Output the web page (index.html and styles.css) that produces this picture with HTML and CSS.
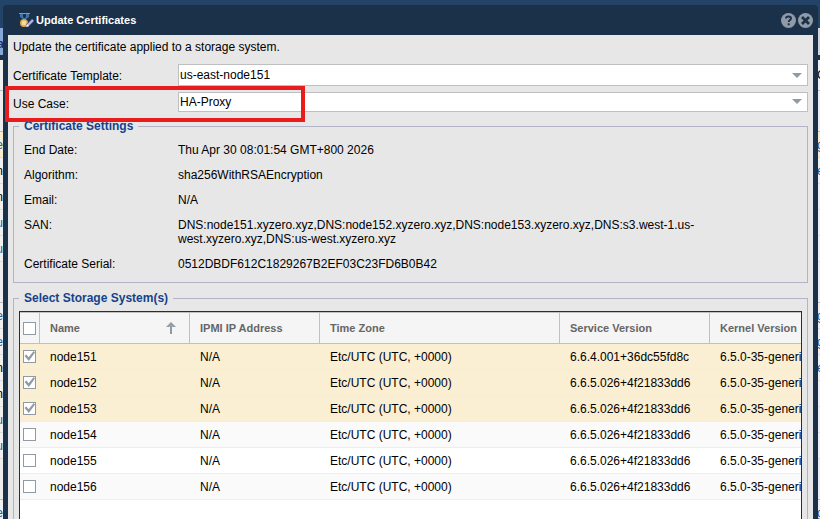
FILE: index.html
```
<!DOCTYPE html>
<html lang="en">
<head>
    <meta charset="UTF-8">
    <meta name="viewport" content="width=device-width, initial-scale=1.0">
    <title>Update Certificates</title>
    <link rel="stylesheet" href="styles.css">
</head>
<body>
    <!-- page behind the dialog -->
    <div class="backdrop" aria-hidden="true">
        <div class="back-top"></div>
        <div class="back-tabs"><span class="back-tab">Ma</span></div>
        <div class="back-head"><span></span><span>C</span></div>
        <div class="back-group"></div>
        <div class="back-row selected"><a>e</a><a>g</a></div>
        <div class="back-row"><span>n</span><a>e</a></div>
        <div class="back-row"><span>n</span></div>
        <div class="back-row"><a>qu</a></div>
        <div class="back-row"><a>qu</a></div>
        <div class="back-group"></div>
        <div class="back-row"><a>e</a><a>g</a></div>
        <div class="back-row"><a>e</a><a>g</a></div>
        <div class="back-row"><span>n</span><a>e</a></div>
        <div class="back-row"><span>n</span></div>
        <div class="back-row"><a>qu</a></div>
        <div class="back-row"><a>qu</a></div>
        <div class="back-group"></div>
        <div class="back-row"><a>e</a><a>g</a></div>
    </div>

    <div class="dialog" role="dialog" aria-labelledby="dialog-title">
        <header class="dialog-header">
            <svg class="medal" viewBox="0 0 15 15" aria-hidden="true">
                <path d="M0 0h11v1H0z" fill="#6f9fc8"/>
                <path d="M1 1h3v3l2 2H4L1 4zM10 1H7v3L5 6h2l3-2z" fill="#3f73a5"/>
                <circle cx="5" cy="10" r="4" fill="#d9a94f"/>
                <circle cx="5" cy="10" r="2.4" fill="#f7dc95"/>
                <path d="M8 13l6-6" stroke="#55598c" stroke-width="3.4"/>
                <path d="M8 13l6-6" stroke="#b8b9dc" stroke-width="1.8"/>
                <path d="M7 14l1-3 2 2z" fill="#eee"/>
            </svg>
            <h1 id="dialog-title">Update Certificates</h1>
            <button class="tool" type="button" aria-label="Help">
                <svg viewBox="0 0 15 15">
                    <circle cx="7.5" cy="7.5" r="7.5" fill="#919aa7"/>
                    <path d="M5 5.6C5 4.2 6 3.5 7.5 3.5S10 4.2 10 5.4C10 7 7.7 6.9 7.7 9" fill="none" stroke="#1b3049" stroke-width="1.9"/>
                    <path d="M6.7 10.3h2v2h-2z" fill="#1b3049"/>
                </svg>
            </button>
            <button class="tool" type="button" aria-label="Close">
                <svg viewBox="0 0 15 15">
                    <circle cx="7.5" cy="7.5" r="7.5" fill="#919aa7"/>
                    <path d="M4 4l7 7M11 4l-7 7" fill="none" stroke="#1b3049" stroke-width="2.8"/>
                </svg>
            </button>
        </header>

        <form class="dialog-body">
            <p class="intro">Update the certificate applied to a storage system.</p>

            <div class="field">
                <label for="template">Certificate Template:</label>
                <div class="combo">
                    <select id="template"><option>us-east-node151</option></select>
                </div>
            </div>
            <div class="field marked">
                <label for="use-case">Use Case:</label>
                <div class="combo">
                    <select id="use-case"><option>HA-Proxy</option></select>
                </div>
            </div>

            <fieldset class="settings">
                <legend>Certificate Settings</legend>
                <dl>
                    <dt>End Date:</dt>
                    <dd>Thu Apr 30 08:01:54 GMT+800 2026</dd>
                    <dt>Algorithm:</dt>
                    <dd>sha256WithRSAEncryption</dd>
                    <dt>Email:</dt>
                    <dd>N/A</dd>
                    <dt>SAN:</dt>
                    <dd>DNS:node151.xyzero.xyz,DNS:node152.xyzero.xyz,DNS:node153.xyzero.xyz,DNS:s3.west-1.us-<br>west.xyzero.xyz,DNS:us-west.xyzero.xyz</dd>
                    <dt>Certificate Serial:</dt>
                    <dd>0512DBDF612C1829267B2EF03C23FD6B0B42</dd>
                </dl>
            </fieldset>

            <fieldset class="systems">
                <legend>Select Storage System(s)</legend>
                <div class="grid">
                    <table>
                        <colgroup>
                            <col class="col-check">
                            <col class="col-name">
                            <col class="col-ipmi">
                            <col class="col-zone">
                            <col class="col-version">
                            <col class="col-version">
                        </colgroup>
                        <thead>
                            <tr>
                                <th><input type="checkbox" aria-label="Select all"></th>
                                <th>
                                    <div class="sorted">
                                        Name
                                        <svg viewBox="0 0 10 12" aria-hidden="true">
                                            <path d="M4 4h2v8H4zM0 5l5-5 5 5H7L5 3.500 3 5z" fill="#8f9aa5"/>
                                        </svg>
                                    </div>
                                </th>
                                <th>IPMI IP Address</th>
                                <th>Time Zone</th>
                                <th>Service Version</th>
                                <th>Kernel Version</th>
                            </tr>
                        </thead>
                        <tbody>
                            <tr class="selected">
                                <td><input type="checkbox" aria-label="node151" checked></td>
                                <td>node151</td>
                                <td>N/A</td>
                                <td>Etc/UTC (UTC, +0000)</td>
                                <td>6.6.4.001+36dc55fd8c</td>
                                <td>6.5.0-35-generic</td>
                            </tr>
                            <tr class="selected">
                                <td><input type="checkbox" aria-label="node152" checked></td>
                                <td>node152</td>
                                <td>N/A</td>
                                <td>Etc/UTC (UTC, +0000)</td>
                                <td>6.6.5.026+4f21833dd6</td>
                                <td>6.5.0-35-generic</td>
                            </tr>
                            <tr class="selected">
                                <td><input type="checkbox" aria-label="node153" checked></td>
                                <td>node153</td>
                                <td>N/A</td>
                                <td>Etc/UTC (UTC, +0000)</td>
                                <td>6.6.5.026+4f21833dd6</td>
                                <td>6.5.0-35-generic</td>
                            </tr>
                            <tr>
                                <td><input type="checkbox" aria-label="node154"></td>
                                <td>node154</td>
                                <td>N/A</td>
                                <td>Etc/UTC (UTC, +0000)</td>
                                <td>6.6.5.026+4f21833dd6</td>
                                <td>6.5.0-35-generic</td>
                            </tr>
                            <tr>
                                <td><input type="checkbox" aria-label="node155"></td>
                                <td>node155</td>
                                <td>N/A</td>
                                <td>Etc/UTC (UTC, +0000)</td>
                                <td>6.6.5.026+4f21833dd6</td>
                                <td>6.5.0-35-generic</td>
                            </tr>
                            <tr>
                                <td><input type="checkbox" aria-label="node156"></td>
                                <td>node156</td>
                                <td>N/A</td>
                                <td>Etc/UTC (UTC, +0000)</td>
                                <td>6.6.5.026+4f21833dd6</td>
                                <td>6.5.0-35-generic</td>
                            </tr>
                        </tbody>
                    </table>
                </div>
            </fieldset>
        </form>
    </div>
</body>
</html>
```
FILE: styles.css
```
* {
    box-sizing: border-box;
    margin: 0;
    padding: 0;
}

body {
    position: relative;
    height: 100vh;
    overflow: hidden;
    padding: 5px 2px 0 3px;
    font-family: "Liberation Sans", Arial, sans-serif;
    font-size: 12px;
    line-height: 14px;
    color: #000;
    background: #f0f0f0;
}

/* page behind the dialog */
.backdrop {
    position: absolute;
    inset: 0;
    overflow: hidden;
}

.back-top {
    height: 28px;
    background: #234369;
}

.back-tabs {
    height: 32px;
    background: linear-gradient(to right, #86a8d8 50%, #d4d4d4 50%);
    border-bottom: 5px solid #1b3049;
}

.back-tab {
    display: flex;
    justify-content: flex-end;
    width: 4px;
    padding-top: 9px;
    font-weight: bold;
    color: #1b2f6b;
}

.back-head,
.back-row {
    display: flex;
    justify-content: space-between;
    align-items: center;
    border-bottom: 1px solid #dcdcdc;
}

.back-head {
    height: 31px;
    border-color: #bbb;
}

.back-row {
    height: 26px;
}

.back-head span,
.back-row > * {
    display: flex;
    justify-content: flex-end;
    width: 3px;
}

.back-head span:last-child,
.back-row > :nth-child(2) {
    justify-content: flex-start;
}

.back-row a {
    color: #1560a8;
}

.back-row.selected {
    background: #f9eccd;
}

.back-group {
    height: 41px;
    background: #ededed;
    border-bottom: 1px solid #bbb;
}

/* dialog */
.dialog {
    position: relative;
    background: #1b3049;
    border-radius: 4px 4px 0 0;
    padding: 0 5px;
}

.dialog-header {
    display: flex;
    align-items: center;
    gap: 2px;
    height: 30px;
    padding: 0 0 0 11px;
}

.dialog-header h1 {
    flex: 1;
    font-size: 11px;
    color: #fff;
}

.medal {
    width: 15px;
    height: 15px;
}

.tool {
    width: 15px;
    height: 15px;
    border: 0;
    background: none;
    cursor: pointer;
}

.tool svg {
    display: block;
}

.dialog-body {
    padding: 5px 5px 0;
    background: #e7e7e7;
}

.intro {
    margin-bottom: 10px;
}

.field {
    display: flex;
    align-items: center;
    margin-bottom: 6px;
}

.field label {
    width: 165px;
    padding-top: 2px;
}

.combo {
    position: relative;
    flex: 1;
}

.combo::after {
    content: "";
    position: absolute;
    top: 9px;
    right: 6px;
    width: 10px;
    height: 5px;
    background: #8f9aa5;
    clip-path: polygon(0 0, 100% 0, 50% 100%);
    pointer-events: none;
}

.combo select {
    display: block;
    width: 100%;
    height: 22px;
    padding: 0 20px 0 1px;
    border: 1px solid #bdbfc0;
    border-radius: 0;
    appearance: none;
    background: #fff;
    font: inherit;
    color: inherit;
}

.marked {
    position: relative;
    margin-bottom: 7px;
}

.marked label {
    padding-top: 4px;
}

.marked select {
    height: 20px;
}

.marked .combo::after {
    top: 7px;
}

/* callout round the use case */
.marked::after {
    content: "";
    position: absolute;
    top: -6px;
    left: -8px;
    width: 300px;
    height: 36px;
    box-sizing: border-box;
    border: 4px solid #e81c1c;
    pointer-events: none;
    z-index: 1;
}

fieldset {
    min-width: 0;
    border: 1px solid #b3b3c8;
}

legend {
    padding: 0 5px;
    font-weight: bold;
    color: #15428b;
}

.settings {
    margin-bottom: 8px;
    padding: 10px 5px 11px;
}

.settings dl {
    display: grid;
    grid-template-columns: 154px 1fr;
    row-gap: 11px;
    padding-left: 5px;
}

.systems {
    padding: 6px 5px;
}

.grid {
    min-height: 240px;
    overflow: hidden;
    border: 1px solid #1b3049;
    background: #fff;
}

.grid table {
    width: 840px;
    table-layout: fixed;
    border-collapse: separate;
    border-spacing: 0;
}

.col-check {
    width: 20px;
}

.col-name,
.col-version {
    width: 150px;
}

.col-ipmi {
    width: 130px;
}

th,
td {
    padding: 0 10px;
    text-align: left;
    vertical-align: middle;
    white-space: nowrap;
}

th {
    height: 32px;
    border: solid #c0c0c0;
    border-width: 1px 1px 1px 0;
    background: #f5f5f5;
    font-size: 11px;
    color: #666;
}

td {
    height: 26px;
    border-bottom: 1px solid #ededed;
}

th:first-child,
td:first-child {
    padding: 0 3px;
}

tbody tr:nth-child(even) {
    background: #fafafa;
}

tbody tr.selected {
    background: #fbefd3;
}

.sorted {
    display: flex;
    align-items: center;
    justify-content: space-between;
}

.sorted svg {
    width: 10px;
    height: 12px;
    margin-right: 3px;
}

input[type="checkbox"] {
    display: block;
    width: 13px;
    height: 13px;
    border: 1px solid #8f9aa5;
    appearance: none;
    background: #fff;
}

input[type="checkbox"]:checked::before {
    content: "";
    display: block;
    height: 11px;
    background: #8f9aa5;
    clip-path: polygon(5% 45%, 22% 32%, 42% 56%, 88% 0, 100% 14%, 44% 92%);
}
```
